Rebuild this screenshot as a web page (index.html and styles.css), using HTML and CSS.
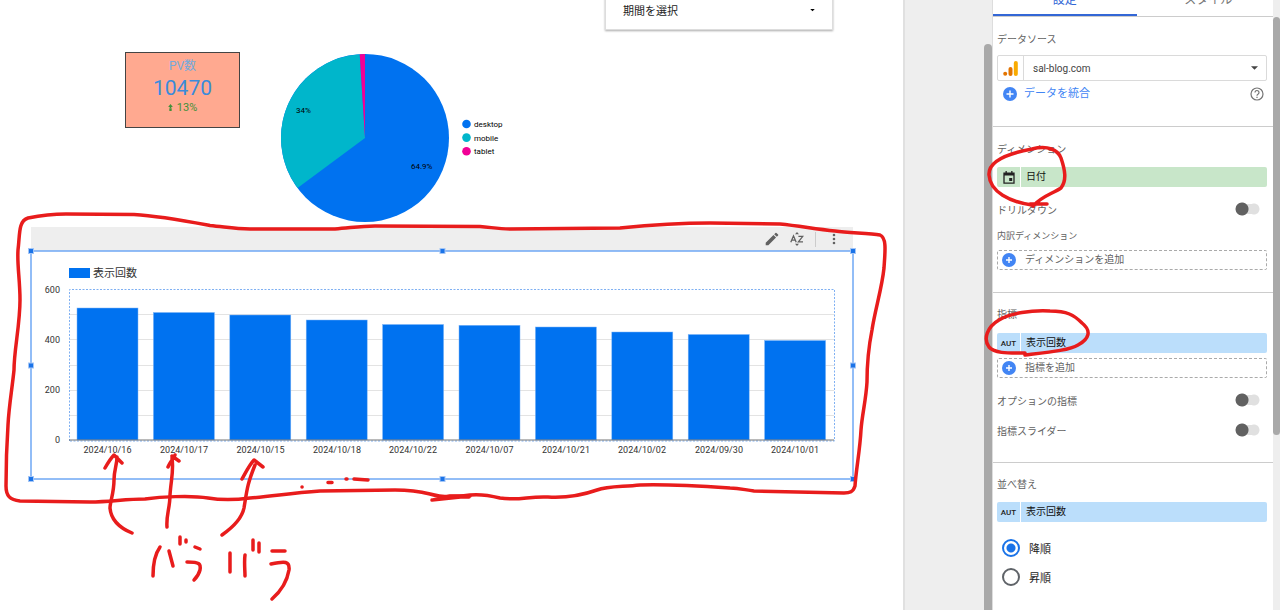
FILE: index.html
```html
<!DOCTYPE html>
<html lang="ja">
<head>
<meta charset="utf-8">
<title>レポート編集</title>
<link rel="stylesheet" href="styles.css">
</head>
<body>
<div class="app">
  <main class="workspace">
    <div class="report">
      <button class="widget period" type="button">
        <span>期間を選択</span>
        <svg class="period-arrow" viewBox="0 0 6 4"><path d="M0 0h6L3 3z"/></svg>
      </button>

      <section class="widget scorecard">
        <span class="score-name">PV数</span>
        <span class="score-value">10470</span>
        <span class="score-change">
          <svg class="score-arrow" viewBox="0 0 6 9"><path d="M3 0l3 4H4v1H2V4H0zM1.500 5.500h3V9h-3z"/></svg>13%
        </span>
      </section>

      <svg class="widget pie" viewBox="0 0 250 170" role="img" aria-label="デバイス別">
        <circle cx="85" cy="85" r="84" fill="#0072f0"/>
        <path d="M85 85L17.500 135A84 84 0 0 1 79.700 1.200z" fill="#00b6cb"/>
        <path d="M85 85L79.700 1.200A84 84 0 0 1 85 1z" fill="#f10096"/>
        <text x="16" y="60">34%</text>
        <text x="131" y="116">64.9%</text>
        <circle cx="186.500" cy="71" r="4.300" fill="#0072f0"/>
        <circle cx="186.500" cy="84.600" r="4.300" fill="#00b6cb"/>
        <circle cx="186.500" cy="98.200" r="4.300" fill="#f10096"/>
        <text x="194" y="74">desktop</text>
        <text x="194" y="88">mobile</text>
        <text x="194" y="101">tablet</text>
      </svg>

      <section class="widget chart">
        <div class="chart-bar">
          <button type="button" class="icon-button" aria-label="編集"><svg class="icon" viewBox="2 2 20 20"><path d="M3 17.250V21h3.750L17.800 9.900l-3.700-3.700zM20.700 7.040a1 1 0 0 0 0-1.410l-2.340-2.340a1 1 0 0 0-1.410 0l-1.830 1.830 3.750 3.750z"/></svg></button>
          <button type="button" class="icon-button" aria-label="並べ替え"><svg class="icon" viewBox="0 0 14 14"><path d="M.8 10.200L3.500 3.800 6.200 10.200M1.800 8.200h3.400M8.400 4.300h4.400L8.400 9.800h4.600" fill="none" stroke="#616161" stroke-width="1.300"/><path d="M7 0l2 2.200H5zM7 14l2-2.200H5z"/></svg></button>
          <span class="bar-rule"></span>
          <button type="button" class="icon-button more" aria-label="その他"><svg class="icon" viewBox="0 0 24 24"><circle cx="12" cy="5" r="2.200"/><circle cx="12" cy="12" r="2.200"/><circle cx="12" cy="19" r="2.200"/></svg></button>
        </div>
        <svg class="chart-plot" viewBox="0 0 822 228" role="img" aria-label="表示回数">
          <rect x="38" y="17" width="21" height="10" fill="#0072f0"/>
          <text class="legend" x="62" y="26">表示回数</text>
          <path d="M38 63.500h765M38 88.500h765M38 114.500h765M38 139.500h765M38 164.500h765" stroke="#e3e3e3"/>
          <g class="bars">
            <rect x="46" y="57" width="61" height="132"/>
            <rect x="122.400" y="61.500" width="61" height="127.500"/>
            <rect x="198.800" y="64" width="61" height="125"/>
            <rect x="275.200" y="69" width="61" height="120"/>
            <rect x="351.600" y="73.500" width="61" height="115.500"/>
            <rect x="428" y="74.300" width="61" height="114.700"/>
            <rect x="504.400" y="76" width="61" height="113"/>
            <rect x="580.800" y="81" width="61" height="108"/>
            <rect x="657.200" y="83.500" width="61" height="105.500"/>
            <rect x="733.600" y="89.500" width="61" height="99.500"/>
          </g>
          <path d="M38.500 190V38.500h765V190z" fill="none" stroke="#7fb0f2" stroke-dasharray="2 1.500"/>
          <path d="M38 189h765" stroke="#757575"/>
          <g text-anchor="end">
            <text x="29" y="42">600</text><text x="29" y="92">400</text>
            <text x="29" y="142">200</text><text x="29" y="192">0</text>
          </g>
          <g text-anchor="middle">
            <text x="76.500" y="202">2024/10/16</text>
            <text x="153" y="202">2024/10/17</text>
            <text x="229.500" y="202">2024/10/15</text>
            <text x="306" y="202">2024/10/18</text>
            <text x="382" y="202">2024/10/22</text>
            <text x="458.500" y="202">2024/10/07</text>
            <text x="535" y="202">2024/10/21</text>
            <text x="611" y="202">2024/10/02</text>
            <text x="688" y="202">2024/09/30</text>
            <text x="764" y="202">2024/10/01</text>
          </g>
          <rect x="0" y="0" width="822" height="228" fill="none" stroke="#6fa8f5" stroke-width="1.500"/>
          <g class="handles">
            <rect x="-2.500" y="-2.500" width="5" height="5"/><rect x="409" y="-2.500" width="5" height="5"/><rect x="819.500" y="-2.500" width="5" height="5"/>
            <rect x="-2.500" y="112" width="5" height="5"/><rect x="819.500" y="112" width="5" height="5"/>
            <rect x="-2.500" y="225.500" width="5" height="5"/><rect x="409" y="225.500" width="5" height="5"/><rect x="819.500" y="225.500" width="5" height="5"/>
          </g>
        </svg>
      </section>
    </div>
    <div class="workspace-thumb"></div>
  </main>

  <aside class="panel">
    <div class="panel-main">
      <nav class="tabs">
        <button type="button" class="tab active">設定</button>
        <button type="button" class="tab">スタイル</button>
      </nav>

      <section class="group source">
        <h2 class="title">データソース</h2>
        <button type="button" class="source-select">
          <span class="source-logo"><svg class="logo" viewBox="0 0 15 15"><circle cx="2.200" cy="12.800" r="2" fill="#e37400"/><rect x="5.500" y="6" width="4" height="9" rx="2" fill="#e37400"/><rect x="10.800" y="0" width="4" height="15" rx="2" fill="#f9ab00"/></svg></span>
          <span class="source-name">sal-blog.com</span>
          <svg class="caret" viewBox="0 0 8 4"><path d="M0 0h8L4 4z"/></svg>
        </button>
        <div class="blend">
          <button type="button" class="blend-button"><svg class="plus" viewBox="0 0 14 14"><circle cx="7" cy="7" r="7" fill="#4285f4"/><path d="M7 3.500v7M3.500 7h7" stroke="#fff" stroke-width="1.400"/></svg>データを統合</button>
          <svg class="help" viewBox="0 0 14 14" fill="none" stroke="#757575" stroke-width="1.200"><circle cx="7" cy="7" r="6"/><path d="M5 5.500a2 2 0 1 1 3.200 1.600C7.400 7.600 7 8 7 8.800M7 9.800v1.200"/></svg>
        </div>
      </section>

      <section class="group dimension">
        <h2 class="title">ディメンション</h2>
        <button type="button" class="chip green"><span class="chip-type"><svg class="calendar" viewBox="0 0 12 13"><path d="M1 2.200h10v10H1z" fill="none" stroke="#222" stroke-width="1.300"/><path d="M1 2h10v2.500H1zM2.500 0h1.300v3H2.500zM8.200 0h1.300v3H8.200zM6.200 7h3v3h-3z" fill="#222"/></svg></span><span class="chip-name">日付</span></button>
        <label class="switch-row drill">ドリルダウン<input class="switch" type="checkbox"></label>
        <h3 class="subtitle">内訳ディメンション</h3>
        <button type="button" class="add"><svg class="plus" viewBox="0 0 14 14"><circle cx="7" cy="7" r="7" fill="#4285f4"/><path d="M7 4v6M4 7h6" stroke="#fff" stroke-width="1.400"/></svg>ディメンションを追加</button>
      </section>

      <section class="group metric">
        <h2 class="title">指標</h2>
        <button type="button" class="chip blue"><span class="chip-type">AUT</span><span class="chip-name">表示回数</span></button>
        <button type="button" class="add"><svg class="plus" viewBox="0 0 14 14"><circle cx="7" cy="7" r="7" fill="#4285f4"/><path d="M7 4v6M4 7h6" stroke="#fff" stroke-width="1.400"/></svg>指標を追加</button>
        <label class="switch-row optional">オプションの指標<input class="switch" type="checkbox"></label>
        <label class="switch-row">指標スライダー<input class="switch" type="checkbox"></label>
      </section>

      <section class="group sort">
        <h2 class="title">並べ替え</h2>
        <button type="button" class="chip blue"><span class="chip-type">AUT</span><span class="chip-name">表示回数</span></button>
        <div class="orders">
          <label class="order"><input class="radio" type="radio" name="order" checked>降順</label>
          <label class="order"><input class="radio" type="radio" name="order">昇順</label>
        </div>
      </section>
    </div>
    <div class="panel-track"><div class="panel-thumb"></div></div>
  </aside>
</div>

<svg class="ink" viewBox="0 0 1280 610" aria-hidden="true">
  <path d="M28 218C38 216 52 214 66 214L134 214.500C160 216 186 221 210 225.500C226 227 235 229 250 229L335 229C350 228 360 226 375 226L480 226.500C490 227 497 229 510 229L620 228C650 225 680 223 710 223L780 224C800 226 815 229 835 231C850 233 870 233 880 235C887 238 885 252 884 268C882 288 875 310 872 330C868 350 867 362 867 382C866 400 862 415 861 430C860 450 856 470 855 486C853 492 850 493 844 493L754 491C745 490 740 488 730 488C700 486 670 484 640 485C622 487 608 486 597 490C580 496 565 498 548 497C528 496 520 501 500 498C488 495 480 494 470 495C450 498 440 497 430 494C418 491 408 490 395 490L320 491C290 493 275 496 250 498C235 500 220 500 208 498C190 495 160 497 145 499C125 499 110 502 90 502L20 501C10 500 6 496 6 486C6 465 7 440 8 425C9 405 12 390 14 370C14 350 20 325 20 300C20 280 17 265 18 250C20 235 18 221 28 218z"/>
  <path d="M433 500L450 496L470 496L432 500M446 497h23"/>
  <path d="M132 533C120 528 111 520 110 508C110 502 114 493 114 480C114 470 117 465 117 457M105 468C109 461 112 457 114 455L122 463"/>
  <path d="M167 527C166 515 170 508 170 495C171 480 174 470 172 458M168 467C170 462 174 458 175 455M172 456L179 461"/>
  <path d="M222 535C232 528 242 518 244 508C247 490 247 485 255 465M242 479C247 470 250 464 254 460L263 467"/>
  <path d="M302 487h.100M328 482.500h4M346 479h1M354 479L368 480"/>
  <path d="M160 547C155 554 153 564 153 576M169 551L173 566M180 537v7M186 540v2M195 547L200 549M187 562C200 562 201 564 200 570C199 574 197 577 194 580"/>
  <path d="M230 553v19M245 555C244 562 245 570 245 576M253 540v10M259 543v9M272 551h13M271 564C285 561 290 561 289 570C287 582 280 592 272 599"/>
  <path d="M1032 205C1010 202 990 192 989 175C988 160 1010 153 1032 149C1048 145 1058 150 1061 158C1065 170 1067 180 1061 188C1052 194 1042 196 1033 206M1030 204h17"/>
  <path d="M1025 355C1050 352 1070 350 1078 345C1089 339 1092 331 1082 323C1074 315 1067 311 1050 311C1032 310 1010 313 999 320C987 327 983 339 989 347C995 354 1010 353 1025 353"/>
</svg>
</body>
</html>
```

FILE: styles.css
```css
* { box-sizing: border-box; }

body {
  margin: 0;
  overflow: hidden;
  background: #eee;
  color: #222;
  font-family: Roboto, "Noto Sans CJK JP", sans-serif;
  font-size: 10px;
}

button {
  margin: 0;
  padding: 0;
  border: 0;
  background: none;
  color: inherit;
  font: inherit;
  text-align: left;
}

h2, h3 { margin: 0; font-weight: 400; }
svg { display: block; flex: none; }

.app { display: flex; height: 100vh; min-height: 610px; }

/* Report canvas */
.workspace { flex: 1; display: flex; justify-content: space-between; background: #eee; }
.report {
  position: relative;
  flex: 1;
  margin-right: 79px;
  background: #fff;
  border-right: 2px solid #e0e0e0;
}
.workspace-thumb { width: 8px; margin-top: 44px; background: #a9a9a9; border-radius: 4px 4px 0 0; }

.widget { position: absolute; }

.period {
  left: 605px;
  top: -10px;
  width: 228px;
  height: 40px;
  padding: 0 17px;
  display: flex;
  align-items: center;
  justify-content: space-between;
  border: 1px solid #ddd;
  background: #fff;
  box-shadow: 0 1px 2px #aaa;
  font-size: 11px;
}
.period-arrow { width: 5px; height: 3px; }

.scorecard {
  left: 125px;
  top: 52px;
  width: 115px;
  height: 76px;
  padding-top: 5px;
  display: flex;
  flex-direction: column;
  align-items: center;
  background: #ffa990;
  border: 1px solid #444;
}
.score-name { color: #74a9dc; font-size: 12px; line-height: 17px; }
.score-value { color: #3a8bdb; font-size: 21px; line-height: 26px; }
.score-change { display: flex; align-items: center; gap: 4px; color: #42903a; font-size: 11px; line-height: 13px; }
.score-arrow { width: 5px; height: 7px; fill: #42903a; }

.pie { left: 280px; top: 53px; width: 250px; height: 170px; font-size: 8px; }

.chart { left: 31px; top: 227px; width: 822px; }
.chart-bar {
  height: 24px;
  padding: 0 12px 0 0;
  display: flex;
  align-items: center;
  justify-content: flex-end;
  gap: 11px;
  background: #eee;
}
.icon-button { width: 14px; height: 14px; }
.icon { width: 14px; height: 14px; fill: #616161; }
.bar-rule { width: 1px; height: 15px; background: #ccc; }
.chart-plot { width: 100%; overflow: visible; font-size: 9px; fill: #333; }
.legend { font-size: 11px; }
.bars { fill: #0072f0; stroke: #7db4f7; stroke-width: 0.5; }
.handles { fill: #1a73e8; stroke: #a4c6f6; stroke-width: 1; }

/* Properties panel */
.panel { width: 288px; display: flex; background: #fff; border-left: 1px solid #ddd; }
.panel-main { flex: 1; }
.panel-track { width: 7px; padding-top: 17px; background: #eee; }
.panel-thumb { height: 418px; background: #a9a9a9; border-radius: 4px; }

.tabs { display: flex; height: 41px; margin: -24px -7px 0 0; border-bottom: 1px solid #ccc; }
.tab { flex: 1; padding-top: 8px; color: #777; font-size: 12px; line-height: 16px; text-align: center; }
.tab.active { padding-top: 10px; color: #3367d6; border-bottom: 2px solid #3367d6; }

.group { padding: 12px 6px 0 4px; border-bottom: 1px solid #ccc; }
.source { height: 110px; }
.dimension { height: 166px; }
.metric { height: 170px; }
.sort { border-bottom: 0; }

.title { color: #616161; font-size: 10px; line-height: 20px; }
.subtitle { padding: 10px 0 6px; color: #616161; font-size: 9px; line-height: 16px; }
.source .title, .dimension .title { line-height: 22px; margin-bottom: -2px; }

.source-select {
  width: 100%;
  height: 26px;
  margin-top: 6px;
  padding-right: 8px;
  display: flex;
  align-items: center;
  border: 1px solid #dadada;
  border-radius: 2px;
}
.source-logo {
  width: 26px;
  height: 24px;
  display: grid;
  place-items: center;
  border-right: 1px solid #dadada;
}
.logo { width: 15px; height: 15px; }
.source-name { flex: 1; padding-left: 9px; color: #444; }
.caret { width: 7px; height: 4px; fill: #444; }

.blend { display: flex; justify-content: space-between; align-items: center; margin-top: 5px; padding: 0 3px 0 6px; }
.blend-button { display: flex; align-items: center; gap: 7px; color: #4285f4; font-size: 11px; line-height: 16px; }
.plus { width: 14px; height: 14px; }
.help { width: 14px; height: 14px; }

.chip {
  width: 100%;
  height: 20px;
  margin-top: 8px;
  display: flex;
  align-items: stretch;
  border-radius: 2px;
  line-height: 19px;
}
.sort .chip { margin-top: 7px; }
.green { background: #c8e6c9; }
.blue { background: #bbdefb; }
.chip-type {
  width: 24px;
  display: grid;
  place-items: center;
  border-right: 1px solid #fff;
  font-size: 8px;
  font-weight: 500;
}
.chip-name { padding-left: 5px; color: #111; }
.calendar { width: 12px; height: 13px; }

.add {
  width: 100%;
  height: 20px;
  margin-top: 5px;
  padding-left: 4px;
  display: flex;
  align-items: center;
  gap: 9px;
  border: 1px dashed #aaa;
  border-radius: 2px;
  color: #616161;
  line-height: 16px;
}
.subtitle + .add { margin-top: 0; }

.switch-row {
  height: 30px;
  padding-right: 7px;
  display: flex;
  align-items: center;
  justify-content: space-between;
  color: #616161;
}
.drill { height: 22px; margin-top: 11px; margin-bottom: -2px; }
.optional { margin-top: 7px; }
.switch {
  appearance: none;
  width: 25px;
  height: 14px;
  margin: 0;
  border-radius: 7px;
  background:
    radial-gradient(circle at 7px 7px, #616161 6px, transparent 7px),
    linear-gradient(#e0e0e0, #e0e0e0) 7px 2px / 12px 10px no-repeat,
    radial-gradient(circle at 19px 7px, #e0e0e0 5px, transparent 6px);
}

.orders { padding: 11px 0 0 5px; }
.order { height: 29px; display: flex; align-items: center; gap: 9px; font-size: 11px; }
.radio {
  appearance: none;
  width: 18px;
  height: 18px;
  margin: 0;
  border: 2px solid #5f6368;
  border-radius: 50%;
}
.radio:checked {
  border-color: #1a73e8;
  background: radial-gradient(circle, #1a73e8 4px, transparent 5px);
}

/* Pen annotations over the whole screen */
.ink {
  position: absolute;
  left: 0;
  top: 0;
  width: 100%;
  pointer-events: none;
  fill: none;
  stroke: #e81c1c;
  stroke-width: 3.500;
  stroke-linecap: round;
  stroke-linejoin: round;
}
```
